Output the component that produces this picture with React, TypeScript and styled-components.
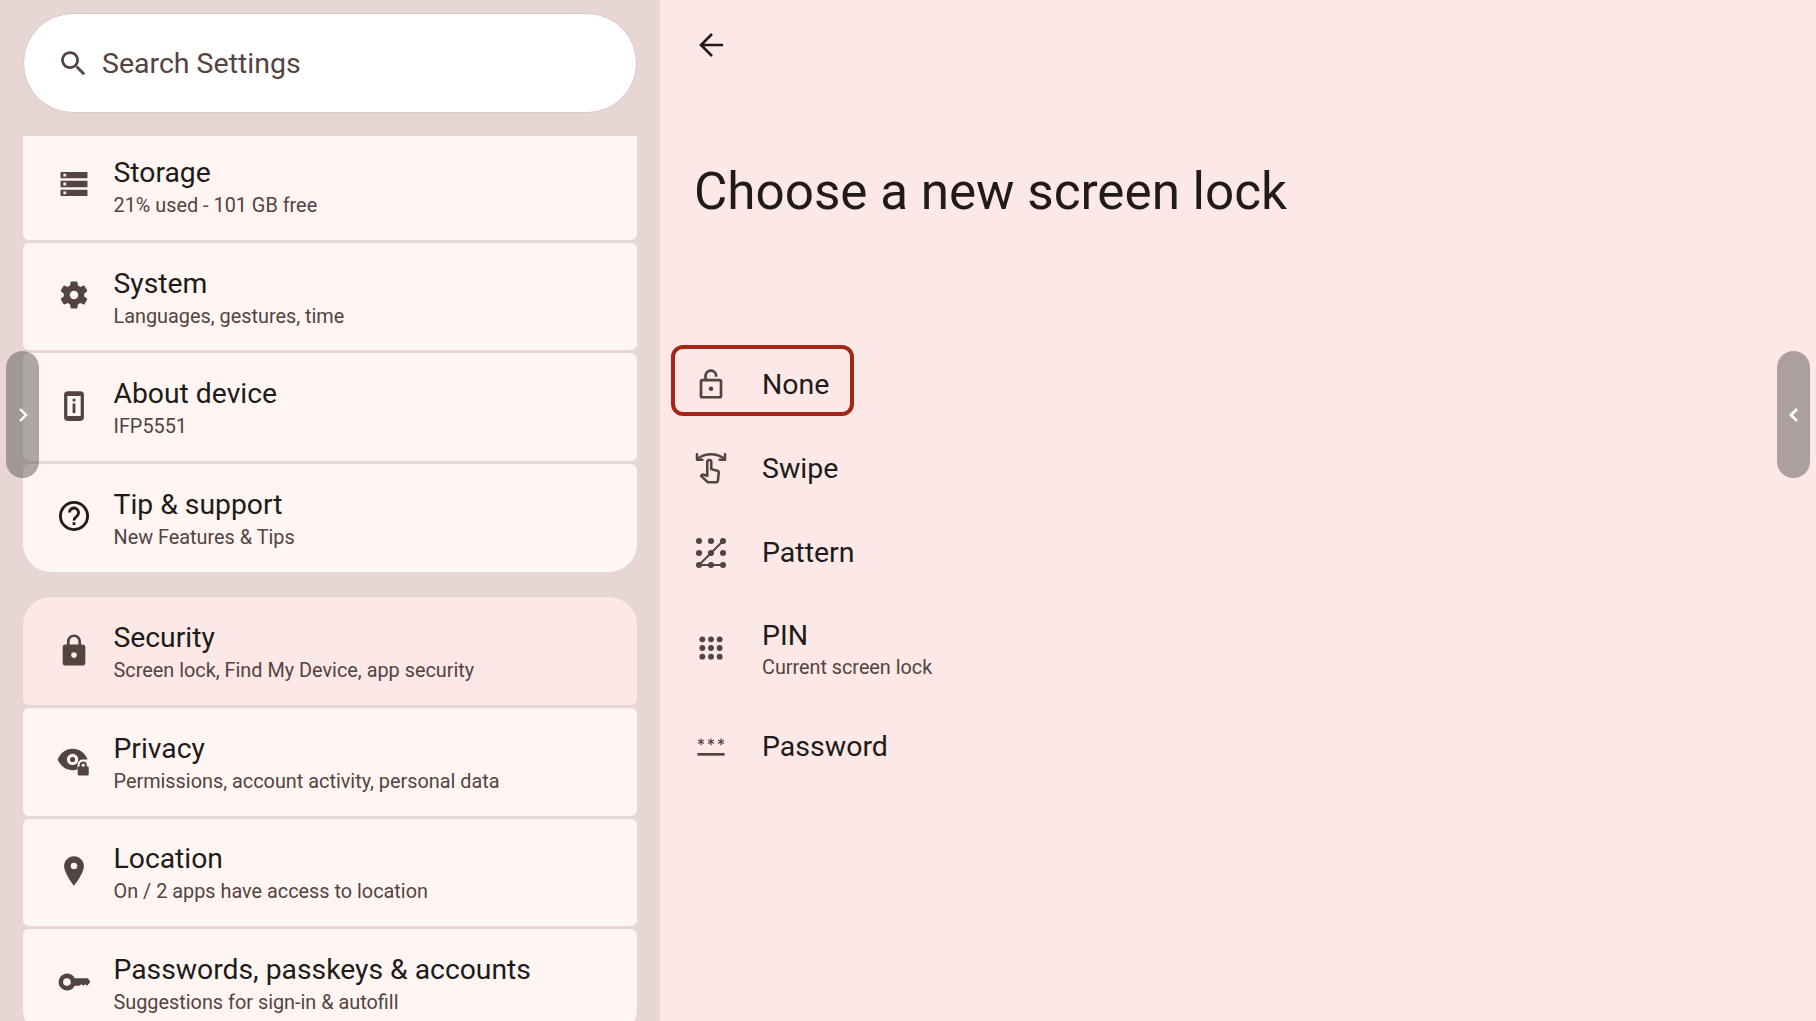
import React, { FC, ReactNode } from 'react'
import styled, { createGlobalStyle } from 'styled-components'

const GlobalStyle = createGlobalStyle`
	html, body {
		margin: 0;
		height: 100%;
		overflow: hidden;
		font-family: Roboto, "Liberation Sans", sans-serif;
	}
	#root {
		height: 100%;
	}
`

const Icon: FC<{ size?: number; children: ReactNode }> = ({ size = 32, children }) => (
	<svg width={size} height={size} viewBox="0 0 24 24" fill="currentColor">
		{children}
	</svg>
)

const icons = {
	storage: <path d="M2.500 20.500h19v-4.500h-19v4.500zm2-3.200h2v2h-2v-2zM2.500 3.500V8h19V3.500h-19zm4 3.200h-2v-2h2v2zM2.500 14.300h19V9.700h-19v4.600zm2-3.300h2v2h-2v-2z" />,
	system: <path d="M19.14,12.94c0.04-0.3,0.06-0.61,0.06-0.94c0-0.32-0.02-0.64-0.07-0.94l2.03-1.58c0.18-0.14,0.23-0.41,0.12-0.61 l-1.92-3.32c-0.12-0.22-0.37-0.29-0.59-0.22l-2.39,0.96c-0.5-0.38-1.03-0.7-1.62-0.94L14.4,2.81c-0.04-0.24-0.24-0.41-0.48-0.41 h-3.84c-0.24,0-0.43,0.17-0.47,0.41L9.25,5.35C8.66,5.59,8.12,5.92,7.63,6.29L5.24,5.33c-0.22-0.08-0.47,0-0.59,0.22L2.74,8.87 C2.62,9.08,2.66,9.34,2.86,9.48l2.03,1.58C4.84,11.36,4.8,11.69,4.8,12s0.02,0.64,0.07,0.94l-2.03,1.58 c-0.18,0.14-0.23,0.41-0.12,0.61l1.92,3.32c0.12,0.22,0.37,0.29,0.59,0.22l2.39-0.96c0.5,0.38,1.03,0.7,1.62,0.94l0.36,2.54 c0.05,0.24,0.24,0.41,0.48,0.41h3.84c0.24,0,0.44-0.17,0.47-0.41l0.36-2.54c0.59-0.24,1.13-0.56,1.62-0.94l2.39,0.96 c0.22,0.08,0.47,0,0.59-0.22l1.92-3.32c0.12-0.22,0.07-0.47-0.12-0.61L19.14,12.94z M12,15c-1.65,0-3-1.35-3-3 s1.35-3,3-3s3,1.35,3,3S13.65,15,12,15z" />,
	about: <path fillRule="evenodd" d="M7.500 1.500h9A2.500 2.500 0 0 1 19 4v16a2.500 2.500 0 0 1-2.500 2.500h-9A2.500 2.500 0 0 1 5 20V4a2.500 2.500 0 0 1 2.500-2.500zM7.300 5v14h9.400V5H7.300zm3.700 1.800h2v2h-2v-2zm0 3.500h2v6.700h-2v-6.700z" />,
	help: (
		<g fill="none" stroke="currentColor" strokeWidth="2">
			<circle cx="12" cy="12" r="9.600" />
			<path d="M8.800 9.600a3.200 3.200 0 1 1 5.200 2.500c-1.200 1-2 1.600-2 3" />
			<path d="M12 16.400v2" />
		</g>
	),
	security: <path fillRule="evenodd" d="M18 8.200h-1V6c0-2.760-2.240-5-5-5S7 3.240 7 6v2.200H6a2 2 0 0 0-2 2V21a2 2 0 0 0 2 2h12a2 2 0 0 0 2-2V10.200a2 2 0 0 0-2-2zM12 17.600a2 2 0 1 1 0-4 2 2 0 0 1 0 4zM15.100 8.200H8.900V6c0-1.710 1.390-3.100 3.100-3.100s3.100 1.390 3.100 3.100v2.200z" />,
	privacy: (
		<>
			<path fillRule="evenodd" d="M11 4c4.700 0 8.700 2.900 10.500 7.200l-.200.500h-3.300A3.500 3.500 0 0 0 14.500 15v3.700c-1.100.300-2.300.500-3.500.500C6.200 19.200 2.200 16 .500 11.600 2.200 7.200 6.200 4 11 4zm0 3.600a4 4 0 1 0 0 8 4 4 0 0 0 0-8zm0 2.200a1.800 1.800 0 1 1 0 3.600 1.800 1.800 0 0 1 0-3.600z" />
			<path fillRule="evenodd" d="M18.500 13a2.500 2.500 0 0 1 2.500 2.500v1h.400a1 1 0 0 1 1 1V22a1 1 0 0 1-1 1h-5.800a1 1 0 0 1-1-1v-4.500a1 1 0 0 1 1-1h.400v-1a2.500 2.500 0 0 1 2.500-2.500zm0 1.400a1.100 1.100 0 0 0-1.100 1.100v1h2.200v-1a1.100 1.100 0 0 0-1.100-1.100z" />
		</>
	),
	location: <path fillRule="evenodd" d="M12 1.500C8.100 1.500 5 4.600 5 8.500c0 5.250 7 14 7 14s7-8.750 7-14c0-3.900-3.100-7-7-7zm0 9.300a2.300 2.300 0 1 1 0-4.600 2.300 2.300 0 0 1 0 4.600z" />,
	key: <path fillRule="evenodd" d="M12.500 9.300A6 6 0 1 0 12.500 14.700h3.200l1.500-1.200 1.400 1.200 1.400-1.200 1.300 1.200 2.200-2.700-1.600-2.700H12.500zM7 9.300a2.700 2.700 0 1 1 0 5.400 2.700 2.700 0 0 1 0-5.400z" />,
	lockOpen: (
		<>
			<g fill="none" stroke="currentColor" strokeWidth="2" strokeLinejoin="round">
				<rect x="4.500" y="8.400" width="15" height="12.800" rx="1" />
				<path d="M7.900 8.400V5.200a4 4 0 0 1 7.900-.9v1.500" />
			</g>
			<circle cx="12" cy="14.800" r="1.700" />
		</>
	),
	swipe: (
		<g fill="none" stroke="currentColor" strokeWidth="1.900" strokeLinejoin="round" strokeLinecap="round" transform="translate(0 -0.800)">
			<path d="M2.500 4.800C8 .8 16 .8 21.500 4.800" />
			<path d="M1.500 1.800v4h4M22.500 1.800v4h-4" />
			<path d="M9.200 7.500a1.500 1.500 0 0 1 3 0v5.400l4.500 1.200a1.500 1.500 0 0 1 1.100 1.600l-.6 5.800a1.500 1.500 0 0 1-1.500 1.300h-5.500a1.500 1.500 0 0 1-1.100-.5L4.500 18l1.200-1.100 3.500 1z" />
		</g>
	),
	pattern: (
		<>
			{[3, 12, 21].flatMap((y) => [3, 12, 21].map((x) => <circle key={`${x}-${y}`} cx={x} cy={y} r="2.300" />))}
			<path d="M3 21 21 3M3 21h18" fill="none" stroke="currentColor" strokeWidth="1.500" />
		</>
	),
	pin: (
		<>
			{[5.500, 12, 18.500].flatMap((y) => [5.500, 12, 18.500].map((x) => <circle key={`${x}-${y}`} cx={x} cy={y} r="2.200" />))}
		</>
	),
	password: (
		<>
			<path d="M1.800 16.500h20.400v2H1.800z" />
			<path d="M4.500 5.600v5M2.300 6.800l4.400 2.600M6.700 6.800 2.300 9.400M12 5.600v5M9.800 6.800l4.400 2.600M14.200 6.800 9.800 9.400M19.500 5.600v5M17.300 6.800l4.400 2.600M21.700 6.800l-4.400 2.600" fill="none" stroke="currentColor" strokeWidth="0.900" />
		</>
	),
}

interface ISetting {
	icon: keyof typeof icons
	title: string
	sub: string
	active?: boolean
	dark?: boolean
}

const groups: ISetting[][] = [
	[
		{ icon: 'storage', title: 'Storage', sub: '21% used - 101 GB free' },
		{ icon: 'system', title: 'System', sub: 'Languages, gestures, time' },
		{ icon: 'about', title: 'About device', sub: 'IFP5551' },
		{ icon: 'help', title: 'Tip & support', sub: 'New Features & Tips', dark: true },
	],
	[
		{ icon: 'security', title: 'Security', sub: 'Screen lock, Find My Device, app security', active: true },
		{ icon: 'privacy', title: 'Privacy', sub: 'Permissions, account activity, personal data' },
		{ icon: 'location', title: 'Location', sub: 'On / 2 apps have access to location' },
		{ icon: 'key', title: 'Passwords, passkeys & accounts', sub: 'Suggestions for sign-in & autofill' },
	],
]

interface ILockOption {
	icon: keyof typeof icons
	title: string
	sub?: string
	focused?: boolean
}

const lockOptions: ILockOption[] = [
	{ icon: 'lockOpen', title: 'None', focused: true },
	{ icon: 'swipe', title: 'Swipe' },
	{ icon: 'pattern', title: 'Pattern' },
	{ icon: 'pin', title: 'PIN', sub: 'Current screen lock' },
	{ icon: 'password', title: 'Password' },
]

const App: FC = () => {
	return (
		<Page>
			<GlobalStyle />
			<Sidebar>
				<SearchBox>
					<SearchIcon>
						<Icon size={33}>
							<path d="M15.500 14h-.79l-.28-.27C15.410 12.590 16 11.110 16 9.500 16 5.910 13.090 3 9.500 3S3 5.910 3 9.500 5.910 16 9.500 16c1.610 0 3.090-.59 4.230-1.570l.27.28v.79l5 4.990L20.490 19l-4.990-5zm-6 0C7.010 14 5 11.990 5 9.500S7.010 5 9.500 5 14 7.010 14 9.500 11.990 14 9.500 14z" />
						</Icon>
					</SearchIcon>
					Search Settings
				</SearchBox>
				<SettingsList>
					{groups.map((group, g) => (
						<Group key={g}>
							{group.map((item) => (
								<Card key={item.title} $active={item.active}>
									<CardIcon $dark={item.dark}>
										<Icon size={34}>{icons[item.icon]}</Icon>
									</CardIcon>
									<div>
										<CardTitle>{item.title}</CardTitle>
										<CardSub>{item.sub}</CardSub>
									</div>
								</Card>
							))}
						</Group>
					))}
				</SettingsList>
			</Sidebar>
			<Detail>
				<BackButton aria-label="Back">
					<svg width="32" height="32" viewBox="0 0 32 32" fill="none" stroke="currentColor" strokeWidth="2.600">
						<path d="M27 16H6M16 5 5 16l11 11" />
					</svg>
				</BackButton>
				<Heading>Choose a new screen lock</Heading>
				<Options>
					{lockOptions.map((option) => (
						<Option key={option.title} $tall={!!option.sub}>
							{option.focused && <FocusRing />}
							<OptionIcon $raised={!!option.sub}>
								<Icon>{icons[option.icon]}</Icon>
							</OptionIcon>
							<div>
								<OptionTitle>{option.title}</OptionTitle>
								{option.sub && <OptionSub>{option.sub}</OptionSub>}
							</div>
						</Option>
					))}
				</Options>
			</Detail>
			<SideHandle $side="left">
				<svg width="10" height="16" viewBox="0 0 10 16" fill="none" stroke="white" strokeWidth="2.400">
					<path d="M2 2l6 6-6 6" />
				</svg>
			</SideHandle>
			<SideHandle $side="right">
				<svg width="10" height="16" viewBox="0 0 10 16" fill="none" stroke="white" strokeWidth="2.800">
					<path d="M8 2 2 8l6 6" />
				</svg>
			</SideHandle>
		</Page>
	)
}

const Page = styled.div`
	position: relative;
	display: grid;
	grid-template-columns: 660px 1fr;
	height: 100%;
	overflow: hidden;
	background-color: #fce8e6;
`

const Sidebar = styled.div`
	display: flex;
	flex-direction: column;
	min-height: 0;
	padding: 13px 23px 0;
	background-color: #e7d6d3;
`

const SearchBox = styled.div`
	display: flex;
	align-items: center;
	flex: none;
	box-sizing: border-box;
	height: 100px;
	padding-left: 33px;
	gap: 12px;
	border: 1px solid #dcc8c5;
	border-radius: 50px;
	background-color: #ffffff;
	color: #534341;
	font-size: 28.5px;
`

const SearchIcon = styled.span`
	display: flex;
	color: #534341;
`

const SettingsList = styled.div`
	flex: 1;
	min-height: 0;
	margin-top: 23px;
	overflow: hidden;
`

const Group = styled.div`
	display: flex;
	flex-direction: column;
	gap: 3px;
	margin-bottom: 25.5px;
	&:first-child {
		margin-top: -4px;
	}
	&:not(:first-child) > div:first-child {
		border-top-left-radius: 28px;
		border-top-right-radius: 28px;
	}
	& > div:last-child {
		border-bottom-left-radius: 28px;
		border-bottom-right-radius: 28px;
	}
`

const Card = styled.div<{ $active?: boolean }>`
	display: flex;
	align-items: center;
	box-sizing: border-box;
	height: 107.7px;
	padding-left: 34px;
	gap: 22.5px;
	border-radius: 6px;
	background-color: ${({ $active }) => ($active ? '#fce8e6' : '#fff6f4')};
`

const CardIcon = styled.div<{ $dark?: boolean }>`
	display: flex;
	margin-top: -3px;
	color: ${({ $dark }) => ($dark ? '#201a19' : '#534341')};
`

const CardTitle = styled.div`
	margin-top: 3px;
	color: #201a19;
	font-size: 28.3px;
	line-height: 34px;
`

const CardSub = styled.div`
	margin-top: 3px;
	color: #534341;
	font-size: 19.85px;
	line-height: 26px;
`

const Detail = styled.div`
	display: flex;
	flex-direction: column;
	min-width: 0;
`

const BackButton = styled.div`
	display: flex;
	margin: 29px 0 0 36px;
	color: #201a19;
`

const Heading = styled.h1`
	margin: 101px 0 0 34px;
	color: #201a19;
	font-size: 51.2px;
	font-weight: 400;
	line-height: 60px;
`

const Options = styled.div`
	display: flex;
	flex-direction: column;
	margin: 121px 0 0 11px;
`

const Option = styled.div<{ $tall?: boolean }>`
	position: relative;
	display: flex;
	align-items: center;
	box-sizing: border-box;
	width: fit-content;
	height: ${({ $tall }) => ($tall ? '110px' : '84px')};
	padding-left: 14px;
	gap: 35px;
`

const OptionIcon = styled.div<{ $raised?: boolean }>`
	display: flex;
	margin-left: 10px;
	margin-top: ${({ $raised }) => ($raised ? '-4px' : '-1px')};
	color: #534341;
`

const OptionTitle = styled.div`
	color: #201a19;
	font-size: 28.5px;
	line-height: 34px;
`

const OptionSub = styled.div`
	margin-top: 2px;
	color: #534341;
	font-size: 19.8px;
	line-height: 26px;
`

const FocusRing = styled.div`
	position: absolute;
	top: 2px;
	left: 0;
	width: 183px;
	height: 71px;
	box-sizing: border-box;
	border: 4px solid #a32617;
	border-radius: 12px;
`

const SideHandle = styled.div<{ $side: 'left' | 'right' }>`
	position: absolute;
	top: 351px;
	${({ $side }) => ($side === 'left' ? 'left: 6px;' : 'right: 6px;')}
	display: flex;
	align-items: center;
	justify-content: center;
	width: 33px;
	height: 127px;
	border-radius: 17px;
	background-color: rgba(92, 88, 86, 0.5);
`

export default App
